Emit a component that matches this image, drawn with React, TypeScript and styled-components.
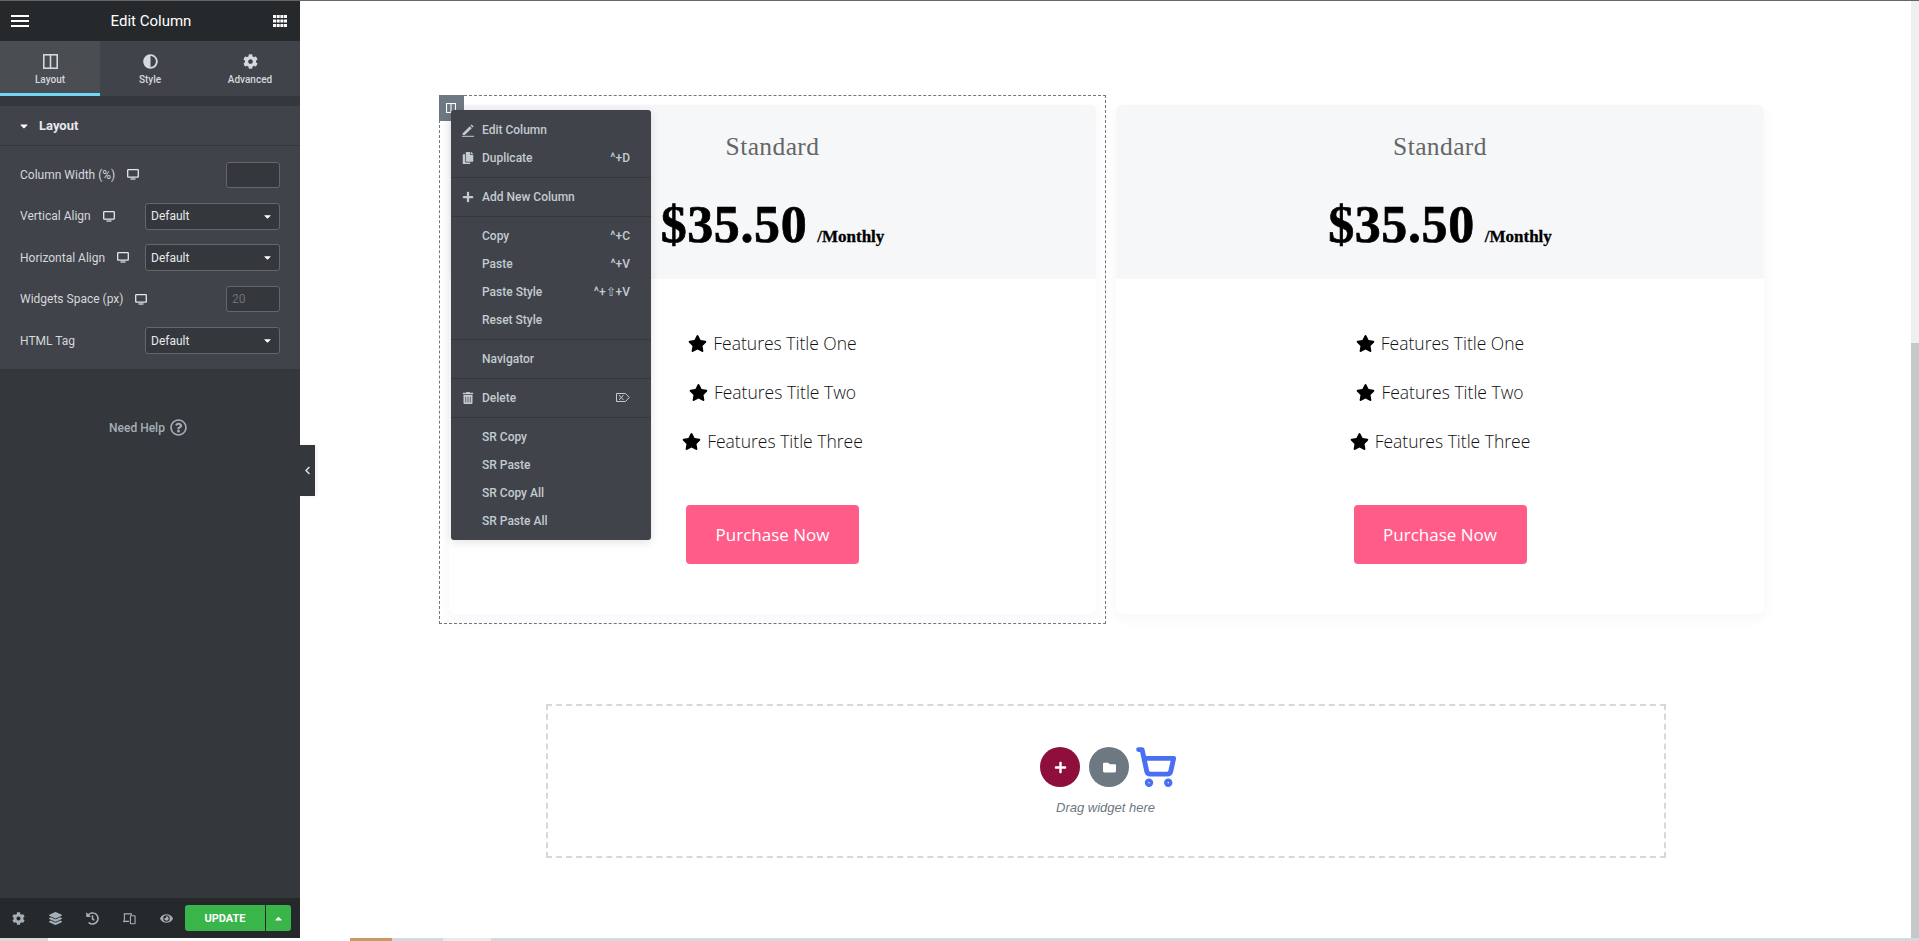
import React from "react";
import styled, { createGlobalStyle } from "styled-components";
import {
	FaAdjust,
	FaCaretDown,
	FaCaretUp,
	FaChevronLeft,
	FaCog,
	FaCopy,
	FaEye,
	FaFolder,
	FaHistory,
	FaLayerGroup,
	FaPlus,
	FaRegQuestionCircle,
	FaStar,
	FaTrashAlt,
} from "react-icons/fa";
import { ShoppingCart } from "lucide-react";

const GlobalStyle = createGlobalStyle`
	html, body {
		margin: 0;
		padding: 0;
		height: 100%;
		overflow: hidden;
		background: #fff;
	}
	* {
		box-sizing: border-box;
	}
`;

const Page = styled.div`
	width: 1919px;
	height: 941px;
	display: flex;
	flex-direction: column;
	overflow: hidden;
	font-family: Roboto, "Liberation Sans", sans-serif;
`;

const TopLine = styled.div`
	height: 1px;
	flex: none;
	background: #666;
`;

const Workspace = styled.div`
	flex: 1;
	min-height: 0;
	display: flex;
`;

const BottomStrip = styled.div`
	height: 3px;
	flex: none;
	display: flex;
	background: #d5d8dc;
`;

const StripPart = styled.div<{ $w: number; $bg: string }>`
	width: ${(p) => p.$w}px;
	background: ${(p) => p.$bg};
`;

/* sidebar */
const Sidebar = styled.aside`
	width: 300px;
	flex: none;
	display: flex;
	flex-direction: column;
	background: #34383c;
	color: #d5d8dc;
	position: relative;
`;

const PanelHeader = styled.header`
	height: 40px;
	flex: none;
	display: flex;
	align-items: center;
	justify-content: space-between;
	padding: 0 13px 0 11px;
	background: #26292c;
	color: #fff;
	font-size: 15px;
`;

const Tabs = styled.nav`
	height: 55px;
	flex: none;
	display: grid;
	grid-template-columns: repeat(3, 100px);
	background: #404349;
`;

const Tab = styled.div<{ $active?: boolean }>`
	display: flex;
	flex-direction: column;
	align-items: center;
	gap: 5px;
	padding-top: 13px;
	font-size: 10px;
	font-weight: 500;
	line-height: 12px;
	color: #d5d8dc;
	background: ${(p) => (p.$active ? "#4a4d52" : "transparent")};
	border-bottom: 3px solid ${(p) => (p.$active ? "#71d7f7" : "transparent")};
	svg {
		font-size: 15px;
		height: 15px;
	}
`;

const Section = styled.section`
	margin-top: 10px;
	background: #404349;
	padding-bottom: 15px;
`;

const SectionTitle = styled.div`
	height: 40px;
	display: flex;
	align-items: center;
	gap: 9px;
	padding-left: 18px;
	font-size: 13px;
	font-weight: 700;
	color: #e6e9ec;
	border-bottom: 1px solid #34383c;
`;

const Controls = styled.div`
	padding: 15px 20px 0;
	display: flex;
	flex-direction: column;
	gap: 14.6px;
`;

const ControlRow = styled.div`
	height: 27px;
	display: flex;
	align-items: center;
	justify-content: space-between;
`;

const ControlLabel = styled.div`
	display: flex;
	align-items: center;
	gap: 12px;
	font-size: 12px;
	color: #d5d8dc;
`;

const NumberBox = styled.input`
	width: 54px;
	height: 26px;
	padding: 0 5px;
	background: #34383c;
	border: 1px solid #64666a;
	border-radius: 3px;
	font-family: inherit;
	font-size: 12px;
	outline: none;
	&::placeholder {
		color: #6d7175;
	}
`;

const SelectBox = styled.div`
	width: 135px;
	height: 27px;
	padding: 0 6px 0 5px;
	display: flex;
	align-items: center;
	justify-content: space-between;
	background: #34383c;
	border: 1px solid #64666a;
	border-radius: 3px;
	font-size: 12px;
	color: #e6e9ec;
`;

const Help = styled.div`
	margin-top: 50px;
	padding-right: 4px;
	display: flex;
	justify-content: center;
	align-items: center;
	gap: 5px;
	font-size: 12px;
	font-weight: 500;
	color: #a4afb7;
	svg {
		font-size: 17px;
	}
`;

const Collapse = styled.div`
	position: absolute;
	left: 300px;
	top: 444px;
	width: 15px;
	height: 51px;
	display: flex;
	align-items: center;
	justify-content: center;
	background: #34383c;
	color: #e6e9ec;
	font-size: 9px;
	box-shadow: 2px 0 4px rgba(0, 0, 0, 0.06);
`;

const PanelFooter = styled.footer`
	margin-top: auto;
	height: 40px;
	flex: none;
	display: flex;
	align-items: center;
	padding: 0 9px 0 12px;
	background: #26292c;
	color: #a4afb7;
`;

const FooterIcons = styled.div`
	display: flex;
	align-items: center;
	gap: 24px;
	font-size: 13px;
	svg {
		display: block;
		width: 13px;
		height: 13px;
	}
`;

const UpdateGroup = styled.div`
	margin-left: auto;
	display: flex;
	height: 26px;
	gap: 1px;
`;

const UpdateButton = styled.div`
	width: 80px;
	display: flex;
	align-items: center;
	justify-content: center;
	background: #39b54a;
	color: #fff;
	font-size: 11px;
	font-weight: 700;
	border-radius: 3px 0 0 3px;
`;

const UpdateArrow = styled.div`
	width: 25px;
	display: flex;
	align-items: center;
	justify-content: center;
	background: #39b54a;
	color: #fff;
	font-size: 11px;
	border-radius: 0 3px 3px 0;
`;

/* preview */
const Preview = styled.main`
	flex: 1;
	min-width: 0;
	display: flex;
`;

const Canvas = styled.div`
	flex: 1;
	min-width: 0;
	padding-top: 94px;
	display: flex;
	flex-direction: column;
	align-items: center;
`;

const PricingRow = styled.div`
	position: relative;
	width: 1335px;
	margin-left: 2px;
	display: grid;
	grid-template-columns: 667px 668px;
`;

const Column = styled.div<{ $selected?: boolean }>`
	height: 529px;
	padding: 9px;
	position: relative;
	border: 1px dashed ${(p) => (p.$selected ? "#6d7882" : "transparent")};
`;

const ColumnHandle = styled.div`
	position: absolute;
	left: -1px;
	top: -1px;
	width: 25px;
	height: 26px;
	display: flex;
	padding: 8px 0 0 7px;
	background: #6d7882;
`;

const Card = styled.article`
	height: 509px;
	border-radius: 6px;
	background: #fff;
	box-shadow: 0 5px 14px rgba(30, 40, 120, 0.04);
	display: flex;
	flex-direction: column;
	align-items: center;
`;

const CardHead = styled.div`
	width: 100%;
	height: 174px;
	flex: none;
	border-radius: 6px 6px 0 0;
	background: #f6f7f9;
	display: flex;
	flex-direction: column;
	align-items: center;
	padding-top: 27px;
`;

const PlanName = styled.div`
	font-family: "Liberation Serif", serif;
	font-size: 25.5px;
	line-height: 30px;
	letter-spacing: 0.4px;
	color: #666;
`;

const PriceLine = styled.div`
	margin-top: 33px;
	display: flex;
	align-items: baseline;
	gap: 10px;
	font-family: "Liberation Serif", serif;
	font-weight: 700;
	color: #000;
`;

const Price = styled.span`
	font-size: 52px;
	line-height: 60px;
	letter-spacing: 0.6px;
	-webkit-text-stroke: 0.7px #000;
`;

const Period = styled.span`
	font-size: 17px;
	-webkit-text-stroke: 0.3px #000;
`;

const Features = styled.ul`
	list-style: none;
	margin: 49px 0 0;
	padding: 0;
	display: flex;
	flex-direction: column;
	align-items: center;
	gap: 19px;
`;

const Feature = styled.li`
	height: 30px;
	display: flex;
	align-items: center;
	gap: 6px;
	font-family: "Open Sans", sans-serif;
	font-weight: 300;
	font-size: 17.5px;
	color: #111;
	svg {
		font-size: 19px;
		color: #000;
	}
`;

const PurchaseButton = styled.div`
	margin-top: 49px;
	width: 173px;
	height: 59px;
	display: flex;
	align-items: center;
	justify-content: center;
	border-radius: 4px;
	background: #ff5c8a;
	color: #fff;
	font-family: "Open Sans", sans-serif;
	font-size: 17px;
`;

const ContextMenu = styled.div`
	position: absolute;
	left: 11px;
	top: 14px;
	width: 200px;
	padding-top: 1px;
	background: #404349;
	border-radius: 3px;
	box-shadow: 0 2px 10px rgba(0, 0, 0, 0.12);
	color: #c2cbd2;
	font-size: 12px;
	font-weight: 500;
`;

const MenuGroup = styled.div`
	padding: 5px 0;
	border-bottom: 1px solid #34383c;
	&:last-child {
		border-bottom: 0;
	}
`;

const MenuRow = styled.div`
	height: 28px;
	display: grid;
	grid-template-columns: 31px 1fr auto;
	align-items: center;
	padding: 0 21px 0 0;
`;

const MenuIcon = styled.span`
	display: flex;
	justify-content: flex-end;
	padding-right: 8px;
	font-size: 12px;
	color: #c2cbd2;
`;

const DropZone = styled.div`
	margin-top: 80px;
	width: 1120px;
	height: 154px;
	border: 2px dashed #d5d8dc;
	display: flex;
	flex-direction: column;
	align-items: center;
	padding-top: 40px;
`;

const DropButtons = styled.div`
	margin-left: 6px;
	display: flex;
	align-items: center;
	gap: 9px;
`;

const RoundButton = styled.div<{ $bg: string }>`
	width: 40px;
	height: 40px;
	border-radius: 50%;
	display: flex;
	align-items: center;
	justify-content: center;
	background: ${(p) => p.$bg};
	color: #fff;
	font-size: 13px;
`;

const CartIcon = styled(ShoppingCart)`
	margin-left: -3px;
	color: #4a6ff5;
`;

const DropText = styled.div`
	margin-top: 12px;
	font-family: "Liberation Sans", sans-serif;
	font-size: 13px;
	font-style: italic;
	color: #6d7882;
`;

const Scrollbar = styled.div`
	width: 8px;
	flex: none;
	padding-top: 342px;
	background: #efefef;
`;

const ScrollThumb = styled.div`
	height: 100%;
	background: #c6c7c9;
`;

/* small drawings */
const Burger = () => (
	<svg width="18" height="14" viewBox="0 0 18 14" fill="#fff">
		<rect y="1" width="18" height="2" />
		<rect y="6" width="18" height="2" />
		<rect y="11" width="18" height="2" />
	</svg>
);

const Apps = () => (
	<svg width="14" height="13" viewBox="0 0 14 13" fill="#fff">
		{[0, 4.5, 9].map((y) =>
			[0, 3.7, 7.4, 11].map((x) => <rect key={`${x}-${y}`} x={x} y={y} width="3" height="3" />),
		)}
	</svg>
);

const ColumnsIcon = ({ size = 15, color = "#d5d8dc" }: { size?: number; color?: string }) => (
	<svg width={size} height={size} viewBox="0 0 15 15" fill="none" stroke={color} strokeWidth="1.6">
		<rect x="0.8" y="0.8" width="13.4" height="13.4" />
		<line x1="7.5" y1="1" x2="7.5" y2="14" />
	</svg>
);

const MonitorIcon = () => (
	<svg width="12" height="11" viewBox="0 0 12 11" fill="none">
		<rect x="0.7" y="0.7" width="10.6" height="7.4" rx="0.6" stroke="#e6e9ec" strokeWidth="1.3" />
		<rect x="3.5" y="9.4" width="5" height="1.2" fill="#e6e9ec" />
	</svg>
);

const ResponsiveIcon = () => (
	<svg viewBox="0 0 14 13" fill="none" stroke="currentColor" strokeWidth="1.2">
		<path d="M1.5 9V1.5H9V3" />
		<path d="M0 9.6h6.5" strokeWidth="1.5" />
		<rect x="8" y="3.6" width="5" height="8.6" rx="0.5" />
	</svg>
);

const EditIcon = () => (
	<svg width="12" height="13" viewBox="0 0 12 13" fill="#c2cbd2">
		<path d="M0.8 9.2L7.8 2.2L9.8 4.2L2.8 11H0.8Z" />
		<path d="M8.5 1.5L9.6 0.4L11.6 2.4L10.5 3.5Z" />
		<rect y="11.8" width="12" height="1" />
	</svg>
);

const DeleteKey = () => (
	<svg width="14" height="9" viewBox="0 0 14 9" fill="none" stroke="#c2cbd2" strokeWidth="1">
		<path d="M0.5 0.5H9.5L13.2 4.5L9.5 8.5H0.5Z" />
		<path d="M3 2L7.5 7M7.5 2L3 7" />
	</svg>
);

const controls = [
	{ label: "Column Width (%)", kind: "input" },
	{ label: "Vertical Align", kind: "select" },
	{ label: "Horizontal Align", kind: "select" },
	{ label: "Widgets Space (px)", kind: "input", placeholder: "20" },
	{ label: "HTML Tag", kind: "select", noDevice: true },
];

const menu = [
	[
		{ label: "Edit Column", icon: <EditIcon /> },
		{ label: "Duplicate", icon: <FaCopy />, key: "^+D" },
	],
	[{ label: "Add New Column", icon: <FaPlus /> }],
	[
		{ label: "Copy", key: "^+C" },
		{ label: "Paste", key: "^+V" },
		{ label: "Paste Style", key: "^+⇧+V" },
		{ label: "Reset Style" },
	],
	[{ label: "Navigator" }],
	[{ label: "Delete", icon: <FaTrashAlt />, key: <DeleteKey /> }],
	[{ label: "SR Copy" }, { label: "SR Paste" }, { label: "SR Copy All" }, { label: "SR Paste All" }],
];

const features = ["Features Title One", "Features Title Two", "Features Title Three"];

function PricingCard() {
	return (
		<Card>
			<CardHead>
				<PlanName>Standard</PlanName>
				<PriceLine>
					<Price>$35.50</Price>
					<Period>/Monthly</Period>
				</PriceLine>
			</CardHead>
			<Features>
				{features.map((f) => (
					<Feature key={f}>
						<FaStar />
						{f}
					</Feature>
				))}
			</Features>
			<PurchaseButton>Purchase Now</PurchaseButton>
		</Card>
	);
}

export default function App() {
	return (
		<Page>
			<GlobalStyle />
			<TopLine />
			<Workspace>
				<Sidebar>
					<PanelHeader>
						<Burger />
						Edit Column
						<Apps />
					</PanelHeader>
					<Tabs>
						<Tab $active>
							<ColumnsIcon />
							Layout
						</Tab>
						<Tab>
							<FaAdjust />
							Style
						</Tab>
						<Tab>
							<FaCog />
							Advanced
						</Tab>
					</Tabs>
					<Section>
						<SectionTitle>
							<FaCaretDown size={12} color="#fff" />
							Layout
						</SectionTitle>
						<Controls>
							{controls.map((c) => (
								<ControlRow key={c.label}>
									<ControlLabel>
										{c.label}
										{!c.noDevice && <MonitorIcon />}
									</ControlLabel>
									{c.kind === "input" ? (
										<NumberBox readOnly placeholder={c.placeholder} />
									) : (
										<SelectBox>
											Default
											<FaCaretDown size={11} color="#fff" />
										</SelectBox>
									)}
								</ControlRow>
							))}
						</Controls>
					</Section>
					<Help>
						Need Help
						<FaRegQuestionCircle />
					</Help>
					<Collapse>
						<FaChevronLeft />
					</Collapse>
					<PanelFooter>
						<FooterIcons>
							<FaCog />
							<FaLayerGroup />
							<FaHistory />
							<ResponsiveIcon />
							<FaEye />
						</FooterIcons>
						<UpdateGroup>
							<UpdateButton>UPDATE</UpdateButton>
							<UpdateArrow>
								<FaCaretUp />
							</UpdateArrow>
						</UpdateGroup>
					</PanelFooter>
				</Sidebar>
				<Preview>
					<Canvas>
						<PricingRow>
							<Column $selected>
								<PricingCard />
								<ColumnHandle>
									<ColumnsIcon size={10} color="#fff" />
								</ColumnHandle>
								<ContextMenu>
									{menu.map((group, i) => (
										<MenuGroup key={i}>
											{group.map((item) => (
												<MenuRow key={item.label}>
													<MenuIcon>{item.icon}</MenuIcon>
													<span>{item.label}</span>
													<span>{item.key}</span>
												</MenuRow>
											))}
										</MenuGroup>
									))}
								</ContextMenu>
							</Column>
							<Column>
								<PricingCard />
							</Column>
						</PricingRow>
						<DropZone>
							<DropButtons>
								<RoundButton $bg="#8e0f3b">
									<FaPlus />
								</RoundButton>
								<RoundButton $bg="#6d7882">
									<FaFolder />
								</RoundButton>
								<CartIcon size={42} strokeWidth={2.8} />
							</DropButtons>
							<DropText>Drag widget here</DropText>
						</DropZone>
					</Canvas>
					<Scrollbar>
						<ScrollThumb />
					</Scrollbar>
				</Preview>
			</Workspace>
			<BottomStrip>
				<StripPart $w={48} $bg="#d9d9d9" />
				<StripPart $w={302} $bg="#fff" />
				<StripPart $w={42} $bg="#c99a63" />
				<StripPart $w={51} $bg="#d5d8dc" />
				<StripPart $w={48} $bg="#eaeaea" />
			</BottomStrip>
		</Page>
	);
}
